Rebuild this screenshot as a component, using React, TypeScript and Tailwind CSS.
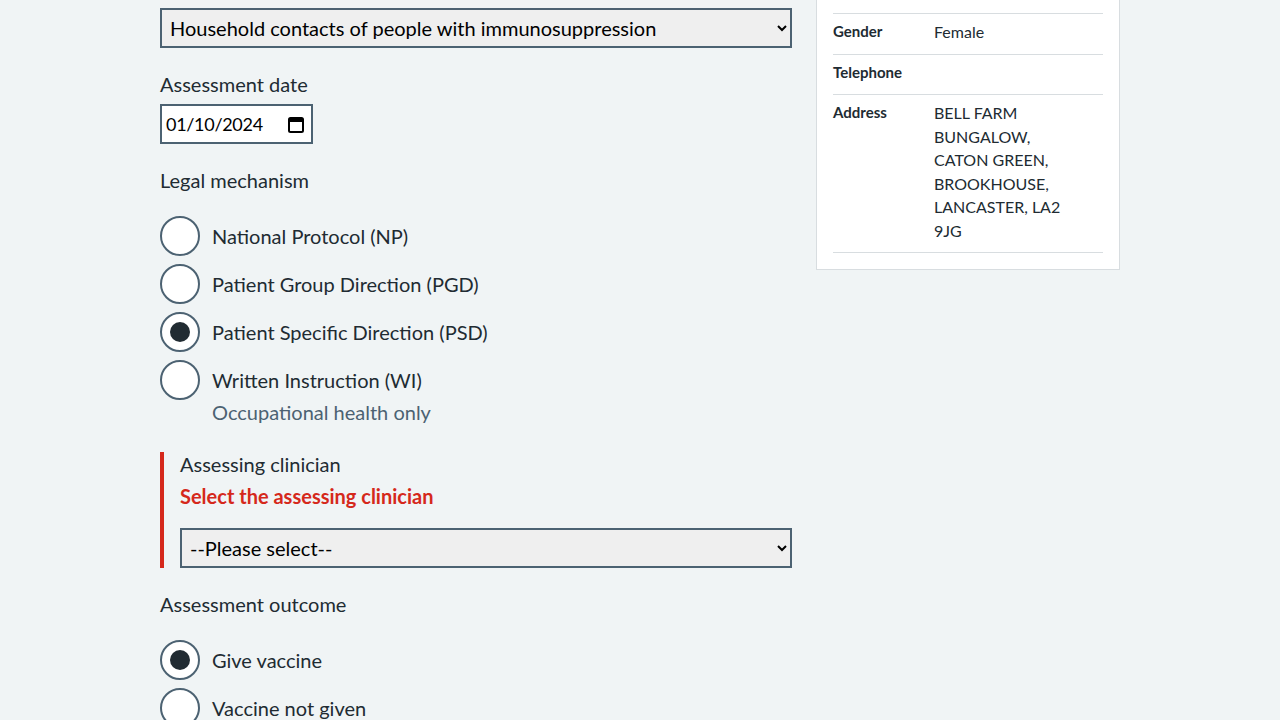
import React from "react";

const font = { fontFamily: "Lato, 'Noto Sans', sans-serif" };

function Radio({ label, checked, hint }: { label: string; checked?: boolean; hint?: string }) {
  return (
    <div className="mb-2">
      <div className="flex items-center">
        <div className="w-10 h-10 rounded-full border-2 border-[#4c6272] bg-white flex items-center justify-center shrink-0">
          {checked && <div className="w-5 h-5 rounded-full bg-[#212b32]" />}
        </div>
        <span className="ml-3 text-[20px] leading-[24px] text-[#212b32]">{label}</span>
      </div>
      {hint && <div className="ml-[52px] text-[20px] leading-[24px] text-[#4c6272]">{hint}</div>}
    </div>
  );
}

function Row({ k, v, first }: { k: string; v?: React.ReactNode; first?: boolean }) {
  return (
    <div className={"flex border-b border-[#d8dde0] pt-[6px] pb-[10px] " + (first ? "border-t" : "")}>
      <div className="w-[101px] shrink-0 text-[15px] leading-[23.5px] font-bold text-[#212b32]">{k}</div>
      <div className="w-[150px] text-[16px] leading-[23.5px] text-[#212b32]">{v}</div>
    </div>
  );
}

export default function App() {
  return (
    <div className="min-h-[720px] h-[720px] overflow-hidden bg-[#f0f4f5]" style={font}>
      <div className="w-[960px] mx-auto flex items-start gap-6">
        <div className="w-[632px] pt-2">
          <select className="w-full h-10 border-2 border-[#4c6272] bg-[#efefef] text-black text-[20px] leading-[24px] pl-1 pr-2" defaultValue="a">
            <option value="a">Household contacts of people with immunosuppression</option>
          </select>

          <div className="mt-6 text-[20px] leading-[24px] text-[#212b32]">Assessment date</div>
          <div className="mt-2 w-[153px] h-10 border-2 border-[#4c6272] bg-white flex items-center justify-between pl-1 pr-[7px]">
            <span className="text-[18px] tracking-[-0.3px] text-black">01/10/2024</span>
            <svg width="16" height="18" viewBox="0 0 16 18">
              <rect x="1" y="3" width="14" height="14" rx="1.5" fill="none" stroke="#000" strokeWidth="2" />
              <rect x="1" y="3" width="14" height="4" fill="#000" />
            </svg>
          </div>

          <div className="mt-6 text-[20px] leading-[24px] text-[#212b32]">Legal mechanism</div>
          <div className="mt-6">
            <Radio label="National Protocol (NP)" />
            <Radio label="Patient Group Direction (PGD)" />
            <Radio label="Patient Specific Direction (PSD)" checked />
            <Radio label="Written Instruction (WI)" hint="Occupational health only" />
          </div>

          <div className="mt-7 border-l-4 border-[#d5281b] pl-4">
            <div className="text-[20px] leading-[24px] text-[#212b32]">Assessing clinician</div>
            <div className="mt-2 text-[20px] leading-[24px] font-bold text-[#d5281b]">Select the assessing clinician</div>
            <select className="mt-5 w-full h-10 border-2 border-[#4c6272] bg-[#efefef] text-black text-[20px] leading-[24px] pl-1 pr-2" defaultValue="p">
              <option value="p">--Please select--</option>
            </select>
          </div>

          <div className="mt-6 text-[20px] leading-[24px] text-[#212b32]">Assessment outcome</div>
          <div className="mt-6">
            <Radio label="Give vaccine" checked />
            <Radio label="Vaccine not given" />
          </div>
        </div>

        <div className="w-[304px] -mt-4 bg-white border border-[#d8dde0] px-4 pt-[28px] pb-4">
          <Row k="Gender" v="Female" first />
          <Row k="Telephone" v="" />
          <Row k="Address" v="BELL FARM BUNGALOW, CATON GREEN, BROOKHOUSE, LANCASTER, LA2 9JG" />
        </div>
      </div>
    </div>
  );
}
